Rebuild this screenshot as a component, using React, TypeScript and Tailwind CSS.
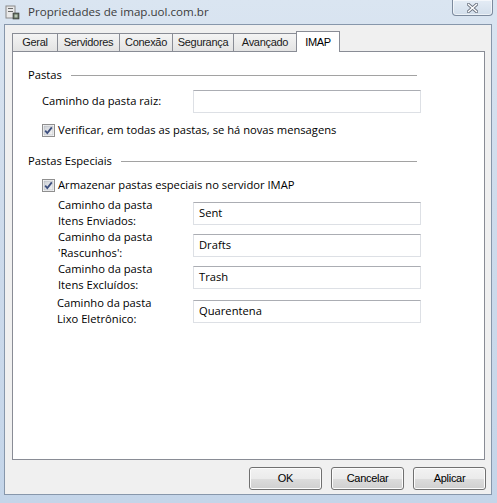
import React from "react";

const tabs = [
  { label: "Geral", w: "w-[46px]" },
  { label: "Servidores", w: "w-[63px]" },
  { label: "Conexão", w: "w-[54px]" },
  { label: "Segurança", w: "w-[62px]" },
  { label: "Avançado", w: "w-[64px]" },
];

const special = [
  { l1: "Caminho da pasta", l2: "Itens Enviados:", value: "Sent" },
  { l1: "Caminho da pasta", l2: "'Rascunhos':", value: "Drafts" },
  { l1: "Caminho da pasta", l2: "Itens Excluídos:", value: "Trash" },
  { l1: "Caminho da pasta", l2: "Lixo Eletrônico:", value: "Quarentena" },
];

const CheckBox = () => (
  <svg width="13" height="13" viewBox="0 0 13 13" className="shrink-0">
    <defs>
      <linearGradient id="cbg" x1="0" y1="0" x2="1" y2="1">
        <stop offset="0" stopColor="#cbcfd5" />
        <stop offset="1" stopColor="#f6f6f6" />
      </linearGradient>
    </defs>
    <rect x="0.5" y="0.5" width="12" height="12" fill="#fff" stroke="#8f8f8f" />
    <rect x="2" y="2" width="9" height="9" fill="url(#cbg)" stroke="#aeb3b9" strokeWidth="0.6" />
    <path d="M3.2 6.6 L5.3 9 L9.8 3.4" fill="none" stroke="#3d4f7e" strokeWidth="1.8" />
  </svg>
);

const TextBox = ({ value }: { value?: string }) => (
  <div className="w-[228px] h-[23px] bg-white border border-[#dde0e5] border-t-[#abadb3] pl-[5px] flex items-center text-black">
    {value}
  </div>
);

const GroupHeader = ({ title }: { title: string }) => (
  <div className="flex items-center w-[389px] h-[16px] gap-[9px]">
    <span>{title}</span>
    <div className="flex-1 h-px bg-[#a2a2a2]" />
  </div>
);

const Button = ({ label }: { label: string }) => (
  <div className="w-[73px] h-[23px] rounded-[3px] border border-[#707070] bg-[linear-gradient(#f2f2f2_0%,#ebebeb_50%,#dddddd_51%,#cfcfcf_100%)] flex items-center justify-center font-['Liberation_Sans',sans-serif] text-[11px] tracking-[-0.3px] text-black shadow-[inset_0_0_0_1px_#fcfcfc]">
    {label}
  </div>
);

export default function App() {
  return (
    <div className="w-[497px] h-[503px] flex flex-col bg-[linear-gradient(180deg,#dae5f1_0%,#cfdcec_40%,#c4d5e9_100%)] font-['Open_Sans','Noto_Sans',sans-serif] text-[11.2px] text-black overflow-hidden">
      {/* Title bar */}
      <div className="h-[24px] flex items-start shrink-0">
        <div className="flex items-center h-[24px] pl-[5px] gap-[7px]">
          <svg width="16" height="16" viewBox="0 0 16 16">
            <rect x="1" y="2" width="9" height="12" fill="#e9e9e9" stroke="#8a8a8a" />
            <rect x="3" y="4" width="5" height="1" fill="#6a6a6a" />
            <rect x="3" y="7" width="5" height="1" fill="#6a6a6a" />
            <rect x="8" y="9" width="6" height="6" fill="#5e6b5e" stroke="#333" strokeWidth="0.6" />
            <rect x="9.5" y="10.5" width="3" height="3" fill="#b9c7b3" />
          </svg>
          <span className="text-[#3c3c3c] text-[11.6px]">Propriedades de imap.uol.com.br</span>
        </div>
        <div className="ml-auto mr-[4px] w-[41px] h-[16px] rounded-b-[4px] border border-t-0 border-[#7c8a9d] bg-[linear-gradient(#e4ecf5,#d2deeb)] flex items-center justify-center shadow-[inset_0_0_0_1px_rgba(255,255,255,0.6)]">
          <svg width="11" height="10" viewBox="0 0 11 10">
            <path d="M1.5 1.5 L9.5 8.5 M9.5 1.5 L1.5 8.5" stroke="#6b7380" strokeWidth="3.2" strokeLinecap="square" />
            <path d="M1.5 1.5 L9.5 8.5 M9.5 1.5 L1.5 8.5" stroke="#ffffff" strokeWidth="1.4" strokeLinecap="square" />
          </svg>
        </div>
      </div>

      {/* Client area */}
      <div className="flex-1 flex flex-col ml-[4px] mr-[5px] mb-[8px] border border-[#8797ab] bg-[#f0f0f0] pt-[6px] pl-[7px] pr-[6px] pb-[4px]">
        {/* Tabs */}
        <div className="flex items-end h-[20px] relative z-10 font-['Liberation_Sans',sans-serif] text-[11px] tracking-[-0.3px]">
          {tabs.map((t, i) => (
            <div
              key={t.label}
              className={`${t.w} h-[18px] ${i > 0 ? "-ml-px" : ""} border border-b-0 border-[#898c95] bg-[linear-gradient(#f4f4f4,#e3e3e3)] flex items-center justify-center text-[#1a1a1a]`}
            >
              {t.label}
            </div>
          ))}
          <div className="w-[44px] h-[21px] -ml-px -mb-px border border-b-0 border-[#898c95] bg-white flex justify-center pt-[2px] text-black">
            IMAP
          </div>
        </div>

        {/* Panel */}
        <div className="flex-1 border border-[#898c95] bg-white pl-[15px] pt-[15px]">
          <GroupHeader title="Pastas" />

          <div className="flex items-center mt-[7px] pl-[14px]">
            <span className="w-[151px]">Caminho da pasta raiz:</span>
            <TextBox />
          </div>

          <div className="flex items-center gap-[3px] mt-[9px] pl-[14px] h-[16px]">
            <CheckBox />
            <span>Verificar, em todas as pastas, se há novas mensagens</span>
          </div>

          <div className="mt-[15px]">
            <GroupHeader title="Pastas Especiais" />
          </div>

          <div className="flex items-center gap-[3px] mt-[8px] pl-[14px] h-[16px]">
            <CheckBox />
            <span>Armazenar pastas especiais no servidor IMAP</span>
          </div>

          <div className="flex flex-col mt-[4px]">
            {special.map((s, i) => (
              <div key={s.value} className={`flex items-center h-[32px] ${i === 3 ? "mt-[2px] pl-[29px]" : "pl-[30px]"}`}>
                <div className={`${i === 3 ? "w-[136px]" : "w-[135px]"} leading-[16px]`}>
                  <div>{s.l1}</div>
                  <div>{s.l2}</div>
                </div>
                <TextBox value={s.value} />
              </div>
            ))}
          </div>
        </div>

        {/* Buttons */}
        <div className="flex justify-end gap-[9px] mt-[7px] pr-[-1px] -mr-px">
          <Button label="OK" />
          <Button label="Cancelar" />
          <Button label="Aplicar" />
        </div>
      </div>
    </div>
  );
}
